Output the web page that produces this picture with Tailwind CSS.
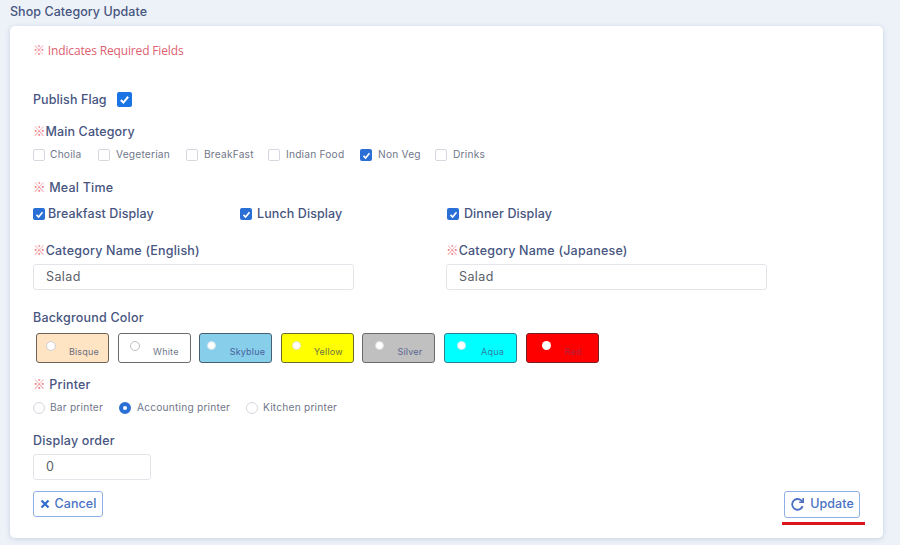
<!DOCTYPE html>
<html lang="en">

<head>
    <meta charset="UTF-8">
    <meta name="viewport" content="width=device-width, initial-scale=1.0">
    <title>Shop Category Update</title>
    <script src="https://cdn.jsdelivr.net/npm/@tailwindcss/browser@4"></script>
</head>

<body class="w-[900px] h-[545px] overflow-hidden bg-[#edf2f9] font-['Inter','Noto_Sans',sans-serif] text-[#47557f]">
    <h1 class="h-[26px] pl-[10px] pt-[4px] text-[12.5px] leading-[16px] font-medium tracking-[0.05px]">Shop Category Update</h1>

    <!-- Form card -->
    <main class="ml-[10px] w-[873px] h-[512px] bg-white rounded-[5px] shadow-[0_1px_5px_rgba(90,110,150,0.25)] pl-[23px] pr-[23px] pt-[15px]">
        <p class="h-[18px] text-[12px] leading-[18px] tracking-[-0.15px] text-[#dd5f70] font-['Open_Sans','Noto_Sans_CJK_JP',sans-serif]"><span class="text-[#ec7a85] font-['Noto_Sans_CJK_JP',sans-serif]">※</span> Indicates Required Fields</p>

        <div class="mt-[32px] flex items-center h-[18px]">
            <label class="w-[84px] text-[12.5px] font-medium tracking-[0.1px]">Publish Flag</label>
            <span class="-mt-[2px] w-[15px] h-[15px] rounded-[2px] bg-[#1b74e4] flex items-center justify-center">
                <svg width="11" height="11" viewBox="0 0 12 12" fill="none" stroke="white" stroke-width="2.2"><path d="M2 6.5l2.8 2.8L10 3"/></svg>
            </span>
        </div>

        <div class="mt-[14px] h-[16px] text-[12.5px] leading-[16px] font-medium tracking-[0.1px]"><span class="text-[#ec7a85] font-['Noto_Sans_CJK_JP',sans-serif]">※</span>Main Category</div>
        <div class="mt-[9px] h-[14px] flex items-center text-[10.2px] tracking-[0.2px] text-[#71778a]">
            <span class="w-[12px] h-[12px] rounded-[2px] border border-[#d5d8de] bg-white"></span><span class="ml-[5px] w-[48px]">Choila</span>
            <span class="w-[12px] h-[12px] rounded-[2px] border border-[#d5d8de] bg-white"></span><span class="ml-[6px] w-[70px]">Vegeterian</span>
            <span class="w-[12px] h-[12px] rounded-[2px] border border-[#d5d8de] bg-white"></span><span class="ml-[6px] w-[64px]">BreakFast</span>
            <span class="w-[12px] h-[12px] rounded-[2px] border border-[#d5d8de] bg-white"></span><span class="ml-[6px] w-[74px]">Indian Food</span>
            <span class="w-[12px] h-[12px] rounded-[2px] bg-[#2a6fd6] flex items-center justify-center"><svg width="9" height="9" viewBox="0 0 12 12" fill="none" stroke="white" stroke-width="2.2"><path d="M2 6.5l2.8 2.8L10 3"/></svg></span><span class="ml-[6px] w-[57px]">Non Veg</span>
            <span class="w-[12px] h-[12px] rounded-[2px] border border-[#d5d8de] bg-white"></span><span class="ml-[6px]">Drinks</span>
        </div>

        <div class="mt-[17px] h-[16px] text-[12.5px] leading-[16px] font-medium tracking-[0.2px]"><span class="text-[#ec7a85] font-['Noto_Sans_CJK_JP',sans-serif]">※</span> Meal Time</div>
        <div class="mt-[10px] h-[16px] grid grid-cols-[207px_207px_1fr] text-[12.5px] font-medium tracking-[0.1px]">
            <div class="flex items-center gap-[3px]"><span class="w-[12px] h-[12px] rounded-[2px] bg-[#2a6fd6] flex items-center justify-center"><svg width="9" height="9" viewBox="0 0 12 12" fill="none" stroke="white" stroke-width="2.2"><path d="M2 6.5l2.8 2.8L10 3"/></svg></span>Breakfast Display</div>
            <div class="flex items-center gap-[5px]"><span class="w-[12px] h-[12px] rounded-[2px] bg-[#2a6fd6] flex items-center justify-center"><svg width="9" height="9" viewBox="0 0 12 12" fill="none" stroke="white" stroke-width="2.2"><path d="M2 6.5l2.8 2.8L10 3"/></svg></span>Lunch Display</div>
            <div class="flex items-center gap-[5px]"><span class="w-[12px] h-[12px] rounded-[2px] bg-[#2a6fd6] flex items-center justify-center"><svg width="9" height="9" viewBox="0 0 12 12" fill="none" stroke="white" stroke-width="2.2"><path d="M2 6.5l2.8 2.8L10 3"/></svg></span>Dinner Display</div>
        </div>

        <div class="mt-[21px] grid grid-cols-[321px_321px] gap-x-[92px] text-[12.5px] font-medium tracking-[0.2px]">
            <div>
                <label class="block h-[16px] leading-[16px]"><span class="text-[#ec7a85] font-['Noto_Sans_CJK_JP',sans-serif]">※</span>Category Name (English)</label>
                <div class="mt-[6px] h-[26px] rounded-[3px] border border-[#e3e5ea] pl-[12px] text-[12.5px] leading-[24px] font-normal tracking-[0.4px] text-[#5b6068]">Salad</div>
            </div>
            <div>
                <label class="block h-[16px] leading-[16px]"><span class="text-[#ec7a85] font-['Noto_Sans_CJK_JP',sans-serif]">※</span>Category Name (Japanese)</label>
                <div class="mt-[6px] h-[26px] rounded-[3px] border border-[#e3e5ea] pl-[12px] text-[12.5px] leading-[24px] font-normal tracking-[0.4px] text-[#5b6068]">Salad</div>
            </div>
        </div>

        <div class="mt-[20px] h-[16px] text-[12.5px] leading-[16px] font-medium tracking-[0.2px]">Background Color</div>
        <div class="mt-[7px] ml-[3px] flex gap-[8.6px] text-[9px] tracking-[0.2px]">
            <div class="relative w-[73px] h-[30px] rounded-[3px] border border-[#6b6258] bg-[#ffe4c4] text-[#6d6f7d]"><span class="absolute left-[9px] top-[7px] w-[10px] h-[10px] rounded-full bg-white border border-[#cfcfcf]"></span><span class="absolute right-[9px] bottom-[4px]">Bisque</span></div>
            <div class="relative w-[73px] h-[30px] rounded-[3px] border border-[#6b6b6b] bg-white text-[#71778a]"><span class="absolute left-[11px] top-[7px] w-[10px] h-[10px] rounded-full bg-white border border-[#bdbdbd]"></span><span class="absolute right-[11px] bottom-[4px]">White</span></div>
            <div class="relative w-[73px] h-[30px] rounded-[3px] border border-[#46606f] bg-[#87ceeb] text-[#46609a]"><span class="absolute left-[7px] top-[7px] w-[9px] h-[9px] rounded-full bg-white border border-[#cfe3ea]"></span><span class="absolute right-[6px] bottom-[4px]">Skyblue</span></div>
            <div class="relative w-[73px] h-[30px] rounded-[3px] border border-[#6b6b30] bg-[#ffff00] text-[#6d7240]"><span class="absolute left-[10px] top-[7px] w-[9px] h-[9px] rounded-full bg-white border border-[#e4e4c0]"></span><span class="absolute right-[10px] bottom-[4px]">Yellow</span></div>
            <div class="relative w-[73px] h-[30px] rounded-[3px] border border-[#6b6b6b] bg-[#c0c0c0] text-[#5b6690]"><span class="absolute left-[12px] top-[7px] w-[9px] h-[9px] rounded-full bg-white border border-[#dddddd]"></span><span class="absolute right-[12px] bottom-[4px]">Silver</span></div>
            <div class="relative w-[73px] h-[30px] rounded-[3px] border border-[#2f7f8f] bg-[#00ffff] text-[#2f7fa8]"><span class="absolute left-[12px] top-[7px] w-[9px] h-[9px] rounded-full bg-white border border-[#c0eeee]"></span><span class="absolute right-[12px] bottom-[4px]">Aqua</span></div>
            <div class="relative w-[73px] h-[30px] rounded-[3px] border border-[#7a1f1f] bg-[#ff0000] text-[#b0203f]"><span class="absolute left-[15px] top-[7px] w-[9px] h-[9px] rounded-full bg-white"></span><span class="absolute right-[16px] bottom-[4px]">Red</span></div>
        </div>

        <div class="mt-[13px] h-[16px] text-[12.5px] leading-[16px] font-medium tracking-[0.2px]"><span class="text-[#ec7a85] font-['Noto_Sans_CJK_JP',sans-serif]">※</span> Printer</div>
        <div class="mt-[9px] h-[14px] flex items-center text-[10.2px] tracking-[0.2px] text-[#71778a]">
            <span class="w-[12px] h-[12px] rounded-full border border-[#d5d8de] bg-white"></span><span class="ml-[5px] w-[69px]">Bar printer</span>
            <span class="w-[12px] h-[12px] rounded-full border-[4px] border-[#2a6fd6] bg-white"></span><span class="ml-[6px] w-[109px]">Accounting printer</span>
            <span class="w-[12px] h-[12px] rounded-full border border-[#d5d8de] bg-white"></span><span class="ml-[5px]">Kitchen printer</span>
        </div>

        <div class="mt-[18px] h-[16px] text-[12.5px] leading-[16px] font-medium tracking-[0.2px]">Display order</div>
        <div class="mt-[5px] w-[118px] h-[26px] rounded-[3px] border border-[#e3e5ea] pl-[12px] text-[12.5px] leading-[24px] text-[#5b6068]">0</div>

        <div class="mt-[11px] flex justify-between text-[12.5px] font-medium tracking-[0.05px] text-[#4a72c4]">
            <button class="w-[70px] h-[26px] rounded-[3px] border border-[#8fb0e6] flex items-center justify-center gap-[5px]">
                <svg width="10" height="10" viewBox="0 0 10 10" fill="none" stroke="#2f6bd0" stroke-width="2.2"><path d="M1.5 1.5l7 7M8.5 1.5l-7 7"/></svg>Cancel
            </button>
            <div class="relative">
                <button class="w-[76px] h-[27px] rounded-[3px] border border-[#8fb0e6] flex items-center justify-center gap-[5px]">
                    <svg width="15" height="15" viewBox="0 0 14 14" fill="none" stroke="#4a6fc0" stroke-width="1.7"><path d="M11.8 8.5A5 5 0 1 1 10.5 3.2L12 4.6"/><path d="M12.3 1v3.9H8.6" stroke-width="1.5"/></svg>Update
                </button>
                <div class="absolute left-[-2px] top-[31px] w-[83px] h-[3px] bg-[#d9161c]"></div>
            </div>
        </div>
    </main>
</body>

</html>
